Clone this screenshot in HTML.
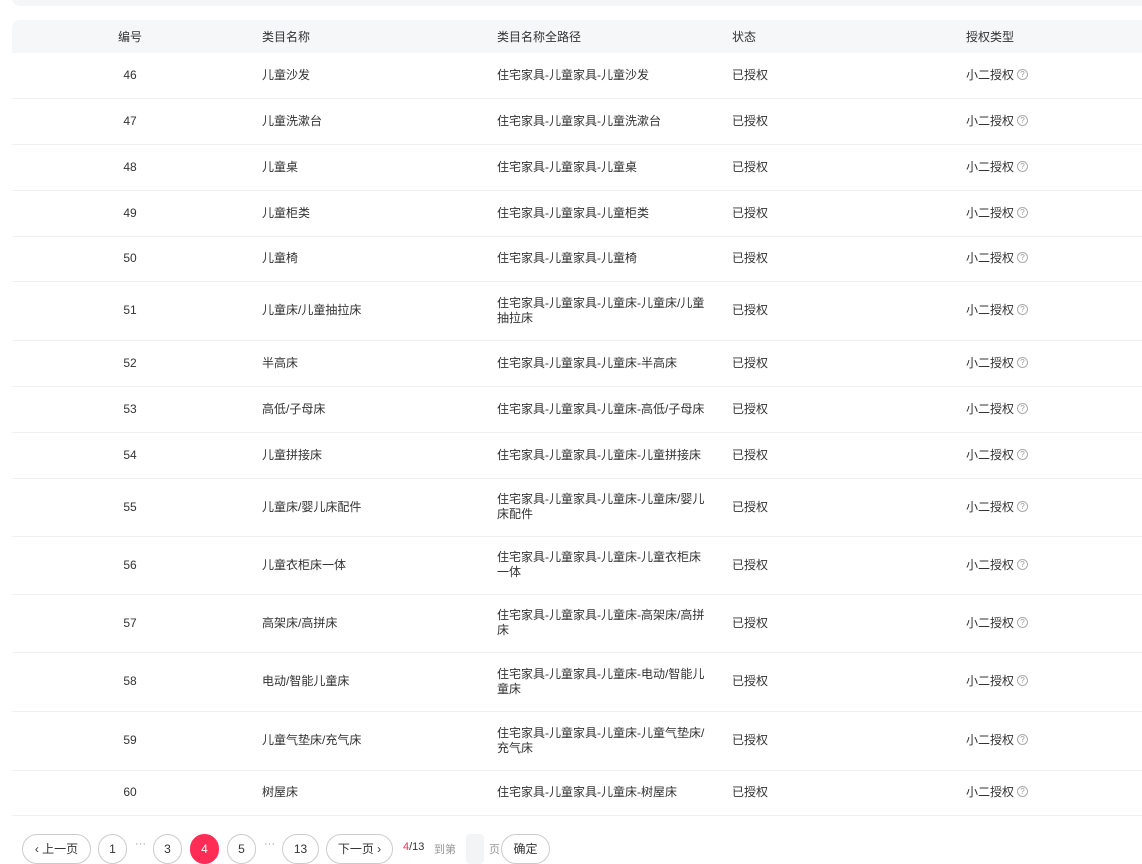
<!DOCTYPE html>
<html><head><meta charset="utf-8"><style>
*{margin:0;padding:0;box-sizing:border-box}
body{width:1142px;height:856px;overflow:hidden;background:#fff;font-family:"Liberation Sans","Noto Sans CJK SC",sans-serif;font-size:12px;color:#333;position:relative}
.top{position:absolute;left:12px;top:-10px;width:1140px;height:16px;background:#f5f6f8;border-radius:8px}
table{position:absolute;left:12px;top:20px;width:1140px;border-collapse:collapse;table-layout:fixed}
th{background:#f6f7f9;font-weight:normal;height:33px;text-align:left;font-size:12px;color:#333}
th:first-child{border-top-left-radius:8px}
td{border-bottom:1px solid #eff0f2;line-height:15px;vertical-align:middle}
td:first-child,th:first-child{text-align:center;padding-right:14px}
td:nth-child(3) div{width:210px}
.q{display:inline-block;width:11px;height:11px;border:1px solid #aaa;border-radius:50%;font-size:8px;line-height:9px;text-align:center;color:#999;vertical-align:middle;margin-left:3px;position:relative;top:-1px}
.pg{position:absolute;top:834px;height:30px;border:1px solid #ccc;border-radius:15px;text-align:center;line-height:28px;font-size:12px;color:#333;background:#fff}
.t{position:absolute;top:841px;font-size:11px;color:#999}
</style></head><body>
<div class="top"></div>
<table>
<colgroup><col style="width:250px"><col style="width:235px"><col style="width:235px"><col style="width:234px"><col></colgroup>
<tr><th>编号</th><th>类目名称</th><th>类目名称全路径</th><th>状态</th><th>授权类型</th></tr>
<tr style="height:45px"><td>46</td><td>儿童沙发</td><td><div>住宅家具-儿童家具-儿童沙发</div></td><td>已授权</td><td>小二授权<span class="q">?</span></td></tr>
<tr style="height:46px"><td>47</td><td>儿童洗漱台</td><td><div>住宅家具-儿童家具-儿童洗漱台</div></td><td>已授权</td><td>小二授权<span class="q">?</span></td></tr>
<tr style="height:46px"><td>48</td><td>儿童桌</td><td><div>住宅家具-儿童家具-儿童桌</div></td><td>已授权</td><td>小二授权<span class="q">?</span></td></tr>
<tr style="height:46px"><td>49</td><td>儿童柜类</td><td><div>住宅家具-儿童家具-儿童柜类</div></td><td>已授权</td><td>小二授权<span class="q">?</span></td></tr>
<tr style="height:45px"><td>50</td><td>儿童椅</td><td><div>住宅家具-儿童家具-儿童椅</div></td><td>已授权</td><td>小二授权<span class="q">?</span></td></tr>
<tr style="height:59px"><td>51</td><td>儿童床/儿童抽拉床</td><td><div>住宅家具-儿童家具-儿童床-儿童床/儿童抽拉床</div></td><td>已授权</td><td>小二授权<span class="q">?</span></td></tr>
<tr style="height:46px"><td>52</td><td>半高床</td><td><div>住宅家具-儿童家具-儿童床-半高床</div></td><td>已授权</td><td>小二授权<span class="q">?</span></td></tr>
<tr style="height:46px"><td>53</td><td>高低/子母床</td><td><div>住宅家具-儿童家具-儿童床-高低/子母床</div></td><td>已授权</td><td>小二授权<span class="q">?</span></td></tr>
<tr style="height:46px"><td>54</td><td>儿童拼接床</td><td><div>住宅家具-儿童家具-儿童床-儿童拼接床</div></td><td>已授权</td><td>小二授权<span class="q">?</span></td></tr>
<tr style="height:58px"><td>55</td><td>儿童床/婴儿床配件</td><td><div>住宅家具-儿童家具-儿童床-儿童床/婴儿床配件</div></td><td>已授权</td><td>小二授权<span class="q">?</span></td></tr>
<tr style="height:58px"><td>56</td><td>儿童衣柜床一体</td><td><div>住宅家具-儿童家具-儿童床-儿童衣柜床一体</div></td><td>已授权</td><td>小二授权<span class="q">?</span></td></tr>
<tr style="height:58px"><td>57</td><td>高架床/高拼床</td><td><div>住宅家具-儿童家具-儿童床-高架床/高拼床</div></td><td>已授权</td><td>小二授权<span class="q">?</span></td></tr>
<tr style="height:59px"><td>58</td><td>电动/智能儿童床</td><td><div>住宅家具-儿童家具-儿童床-电动/智能儿童床</div></td><td>已授权</td><td>小二授权<span class="q">?</span></td></tr>
<tr style="height:59px"><td>59</td><td>儿童气垫床/充气床</td><td><div>住宅家具-儿童家具-儿童床-儿童气垫床/充气床</div></td><td>已授权</td><td>小二授权<span class="q">?</span></td></tr>
<tr style="height:45px"><td>60</td><td>树屋床</td><td><div>住宅家具-儿童家具-儿童床-树屋床</div></td><td>已授权</td><td>小二授权<span class="q">?</span></td></tr>
</table>
<div class="pg" style="left:22px;width:69px">‹ 上一页</div>
<div class="pg" style="left:98px;width:29px">1</div>
<div class="t" style="left:135px;top:838px">···</div>
<div class="pg" style="left:153px;width:29px">3</div>
<div class="pg" style="left:190px;width:29px;background:#ff2d55;border-color:#ff2d55;color:#fff">4</div>
<div class="pg" style="left:227px;width:29px">5</div>
<div class="t" style="left:264px;top:838px">···</div>
<div class="pg" style="left:282px;width:37px">13</div>
<div class="pg" style="left:326px;width:67px">下一页 ›</div>
<div class="t" style="left:403px;color:#333"><span style="color:#ff2d55">4</span>/13</div>
<div class="t" style="left:434px">到第</div>
<div style="position:absolute;left:466px;top:834px;width:18px;height:30px;background:#f3f4f6;border-radius:4px"></div>
<div class="t" style="left:489px">页</div>
<div class="pg" style="left:501px;width:49px">确定</div>
</body></html>
